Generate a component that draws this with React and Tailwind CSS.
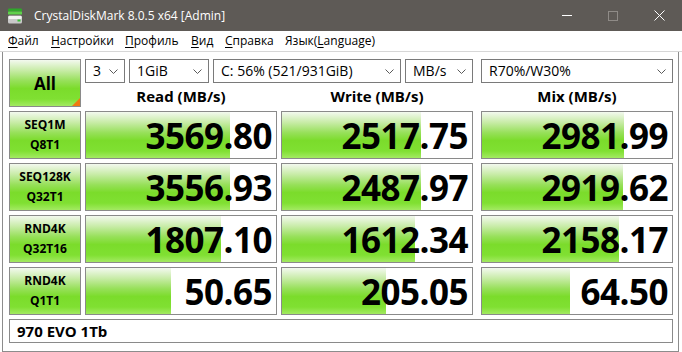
import React from 'react';

const GREEN =
  'bg-[linear-gradient(to_bottom,#f3f9ef_0%,#c9eca9_22%,#97e05a_45%,#7bdc2b_62%,#80e032_85%,#a3ea62_100%)]';

const Chevron = () => (
  <svg width="9" height="5" viewBox="0 0 9 5" className="shrink-0">
    <polyline points="0.5,0.5 4.5,4.5 8.5,0.5" fill="none" stroke="#5a5a5a" strokeWidth="1" />
  </svg>
);

const Select = ({ value, width }) => (
  <div
    className="h-[24px] flex items-center justify-between pl-[7px] pr-[6px] bg-white border border-[#7a7a7a] text-[14px] text-black"
    style={{ width }}
  >
    <span className="leading-none whitespace-nowrap">{value}</span>
    <Chevron />
  </div>
);

const Label = ({ top, bottom }) => (
  <div className={`w-[72px] h-[48px] border border-[#8a8a8a] ${GREEN} flex flex-col items-center justify-center text-[12px] font-bold leading-[20px] text-black`}>
    <span>{top}</span>
    <span>{bottom}</span>
  </div>
);

const Cell = ({ value, bar }) => (
  <div className="relative w-[192px] h-[48px] border border-[#8a8a8a] bg-white overflow-hidden">
    <div className={`absolute left-0 top-0 bottom-0 ${GREEN}`} style={{ width: bar }} />
    <div className="relative h-full flex items-center justify-end pr-[4px] text-[35px] font-bold leading-none tracking-[-0.5px] text-black">
      {value}
    </div>
  </div>
);

const rows = [
  { top: 'SEQ1M', bottom: 'Q8T1', cells: [['3569.80', 144], ['2517.75', 139], ['2981.99', 142]] },
  { top: 'SEQ128K', bottom: 'Q32T1', cells: [['3556.93', 144], ['2487.97', 139], ['2919.62', 141]] },
  { top: 'RND4K', bottom: 'Q32T16', cells: [['1807.10', 135], ['1612.34', 133], ['2158.17', 137]] },
  { top: 'RND4K', bottom: 'Q1T1', cells: [['50.65', 85], ['205.05', 104], ['64.50', 88]] },
];

const menu = [
  { pre: '', u: 'Ф', post: 'айл', w: 43 },
  { pre: '', u: 'Н', post: 'астройки', w: 74 },
  { pre: '', u: 'П', post: 'рофиль', w: 66 },
  { pre: '', u: 'В', post: 'ид', w: 34 },
  { pre: '', u: 'С', post: 'правка', w: 60 },
  { pre: 'Язык(', u: 'L', post: 'anguage)', w: 120 },
];

const AppIcon = () => (
  <svg width="16" height="16" viewBox="0 0 16 16">
    <rect x="1" y="0.5" width="14" height="3" rx="1" fill="#2fa82a" />
    <rect x="1" y="3.5" width="14" height="3" rx="0.5" fill="#5fd04a" />
    <rect x="1" y="7.5" width="14" height="8" rx="1.5" fill="#c9c9c9" />
    <rect x="1.5" y="8" width="13" height="3" rx="1" fill="#f2f2f2" />
    <rect x="10.5" y="11.5" width="3" height="2" fill="#39c236" />
  </svg>
);

export default function App() {
  return (
    <div className="w-[682px] h-[352px] bg-white overflow-hidden flex flex-col font-['Open_Sans','Noto_Sans',sans-serif]">
      {/* Title bar */}
      <div className="h-[31px] shrink-0 bg-[#5e5a56] flex items-center text-white">
        <div className="pl-[7px] pr-[11px] flex items-center">
          <AppIcon />
        </div>
        <span className="text-[12px] leading-none">CrystalDiskMark 8.0.5 x64 [Admin]</span>
        <div className="ml-auto flex items-center h-full">
          <div className="w-[46px] h-full flex items-center justify-center">
            <div className="w-[10px] h-px bg-white" />
          </div>
          <div className="w-[46px] h-full flex items-center justify-center">
            <div className="w-[10px] h-[10px] border border-[#8f8b87]" />
          </div>
          <div className="w-[46px] h-full flex items-center justify-center">
            <svg width="11" height="11" viewBox="0 0 11 11">
              <path d="M0.5 0.5 L10.5 10.5 M10.5 0.5 L0.5 10.5" stroke="#ffffff" strokeWidth="1" />
            </svg>
          </div>
        </div>
      </div>

      {/* Menu bar */}
      <div className="h-[20px] shrink-0 flex items-center pl-[8px] text-[12px] text-black">
        {menu.map((m) => (
          <span key={m.post} className="whitespace-nowrap leading-none" style={{ width: m.w }}>
            {m.pre}
            <span className="underline underline-offset-2">{m.u}</span>
            {m.post}
          </span>
        ))}
      </div>
      <div className="h-px shrink-0 bg-[#d7d7d7]" />

      {/* Main panel */}
      <div className="ml-[2px] w-[677px] h-[300px] border-x border-b border-[#8c8c8c] pt-[7px] pl-[6px] flex flex-col">
        <div className="flex h-[52px]">
          <div className={`relative w-[72px] h-[48px] border border-[#8a8a8a] ${GREEN} flex items-center justify-center`}>
            <span className="text-[17px] font-bold leading-none text-black">All</span>
            <div className="absolute right-0 bottom-0 w-0 h-0 border-l-[8px] border-l-transparent border-b-[8px] border-b-[#f07a10]" />
          </div>
          <div className="ml-[4px] flex flex-col">
            <div className="flex h-[24px]">
              <Select value="3" width={40} />
              <div className="w-[4px]" />
              <Select value="1GiB" width={80} />
              <div className="w-[4px]" />
              <Select value="C: 56% (521/931GiB)" width={188} />
              <div className="w-[4px]" />
              <Select value="MB/s" width={68} />
              <div className="w-[8px]" />
              <Select value="R70%/W30%" width={192} />
            </div>
            <div className="flex h-[28px] items-center pb-[2px] text-[15px] font-bold text-black">
              <div className="w-[192px] text-center">Read (MB/s)</div>
              <div className="w-[4px]" />
              <div className="w-[192px] text-center">Write (MB/s)</div>
              <div className="w-[8px]" />
              <div className="w-[192px] text-center">Mix (MB/s)</div>
            </div>
          </div>
        </div>

        <div className="flex flex-col gap-[4px]">
          {rows.map((r, i) => (
            <div key={i} className="flex">
              <Label top={r.top} bottom={r.bottom} />
              <div className="w-[4px]" />
              <Cell value={r.cells[0][0]} bar={r.cells[0][1]} />
              <div className="w-[4px]" />
              <Cell value={r.cells[1][0]} bar={r.cells[1][1]} />
              <div className="w-[8px]" />
              <Cell value={r.cells[2][0]} bar={r.cells[2][1]} />
            </div>
          ))}
          <div className="w-[664px] h-[24px] border border-[#8a8a8a] bg-white flex items-center pl-[7px] text-[15px] font-bold text-black leading-none">
            970 EVO 1Tb
          </div>
        </div>
      </div>
    </div>
  );
}
